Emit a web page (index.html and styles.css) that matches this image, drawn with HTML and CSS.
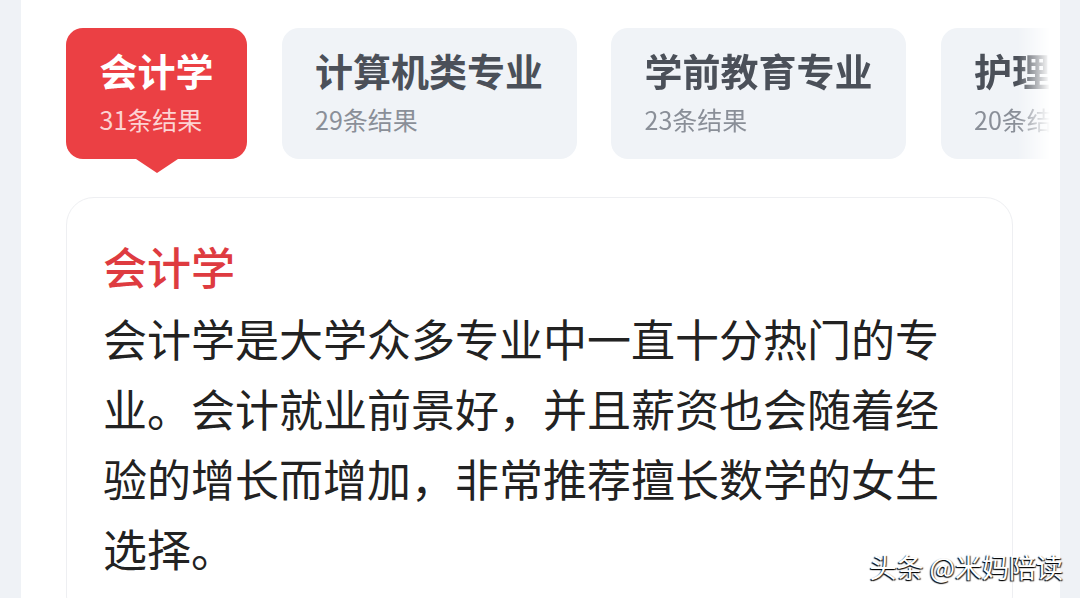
FILE: index.html
```html
<!DOCTYPE html>
<html lang="zh-CN">
<head>
    <meta charset="UTF-8">
    <meta name="viewport" content="width=device-width, initial-scale=1.0">
    <title>热门专业</title>
    <link rel="stylesheet" href="styles.css">
</head>
<body>

    <div class="page">
        <div class="side side-left"></div>

        <!-- Hlavní panel -->
        <div class="panel">
            <div class="tabs">
                <div class="tab active">
                    <div class="tab-title">会计学</div>
                    <div class="tab-count">31条结果</div>
                </div>
                <div class="tab">
                    <div class="tab-title">计算机类专业</div>
                    <div class="tab-count">29条结果</div>
                </div>
                <div class="tab">
                    <div class="tab-title">学前教育专业</div>
                    <div class="tab-count">23条结果</div>
                </div>
                <div class="tab">
                    <div class="tab-title">护理学专业</div>
                    <div class="tab-count">20条结果</div>
                </div>
            </div>

            <div class="card">
                <h2 class="card-title">会计学</h2>
                <p class="card-text">会计学是大学众多专业中一直十分热门的专业。会计就业前景好，并且薪资也会随着经验的增长而增加，非常推荐擅长数学的女生选择。</p>
            </div>
        </div>

        <div class="side side-right"></div>
    </div>

    <div class="watermark">头条 @米妈陪读</div>

</body>
</html>
```

FILE: styles.css
```css
/* Základ */
html, body {
    margin: 0;
    height: 100%;
    overflow: hidden;
}

body {
    font-family: "Noto Sans CJK SC", "Noto Sans", sans-serif;
    background-color: #fff;
}

.page {
    display: flex;
    height: 100%;
}

.side {
    background-color: #eff2f6;
}

.side-left {
    width: 21px;
    flex-shrink: 0;
}

.side-right {
    width: 20px;
    flex-shrink: 0;
}

.panel {
    flex: 1;
    min-width: 0;
    padding: 28px 47px 0 45px;
    background-color: #fff;
}

/* Záložky */
.tabs {
    display: flex;
    gap: 34.5px;
    margin-right: -47px;
    overflow: hidden;
    -webkit-mask-image: linear-gradient(to right, #000 calc(100% - 42px), rgba(0, 0, 0, 0) calc(100% - 10px));
    mask-image: linear-gradient(to right, #000 calc(100% - 42px), rgba(0, 0, 0, 0) calc(100% - 10px));
    padding-bottom: 14px;
}

.tab {
    position: relative;
    flex-shrink: 0;
    height: 131px;
    padding: 0 33.5px;
    border-radius: 17px;
    background-color: #f0f3f7;
    box-sizing: border-box;
}

.tab-title {
    margin-top: 19px;
    font-size: 38px;
    line-height: 46px;
    font-weight: 700;
    color: #4b5059;
    white-space: nowrap;
}

.tab-count {
    margin-top: 9px;
    font-size: 25px;
    line-height: 34px;
    color: #8a8f98;
    white-space: nowrap;
}

.tab.active {
    background-color: #eb4044;
}

.tab.active .tab-title {
    color: #fff;
}

.tab.active .tab-count {
    color: #fcd3d3;
}

.tab.active::after {
    content: "";
    position: absolute;
    left: 50%;
    bottom: -14px;
    margin-left: -21px;
    border-left: 21px solid transparent;
    border-right: 21px solid transparent;
    border-top: 14px solid #eb4044;
}

/* Karta s popisem */
.card {
    margin-top: 24px;
    padding: 40px 60px 40px 36px;
    border: 1px solid #eeeff2;
    border-radius: 28px;
}

.card-title {
    margin: 0;
    font-size: 44px;
    line-height: 56px;
    font-weight: 500;
    color: #de3b40;
}

.card-text {
    margin: 9px 0 0;
    font-size: 44px;
    line-height: 70px;
    color: #222;
}

/* Vodoznak */
.watermark {
    position: absolute;
    right: 17px;
    bottom: 14px;
    font-size: 27px;
    line-height: 34px;
    color: #fff;
    text-shadow: -1px 1px 1px #000, 1px 1px 1px #333;
}
```
